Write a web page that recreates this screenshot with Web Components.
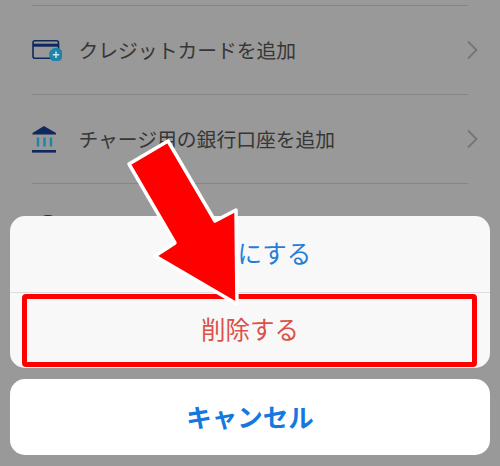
<!DOCTYPE html>
<html lang="ja">
<head>
<meta charset="utf-8">
<style>
  html, body { margin: 0; height: 100%; background: #999; overflow: hidden; }
  body { font-family: "Noto Sans CJK JP", "Noto Sans", sans-serif; }
</style>
</head>
<body>
<pay-screen>
  <pay-row label="クレジットカードを追加">
    <svg slot="icon" width="30" height="22" viewBox="0 -0.7 30 22">
      <rect x="1" y="1" width="25.5" height="17.5" rx="2" fill="none" stroke="#10295c" stroke-width="1.6"/>
      <rect x="1" y="4" width="25.5" height="3" fill="#10295c"/>
      <circle cx="24" cy="15" r="7" fill="#1d84aa"/>
      <path d="M24 11.8v6.4M20.8 15h6.4" stroke="#cfe3ea" stroke-width="1.5"/>
    </svg>
  </pay-row>
  <pay-row label="チャージ用の銀行口座を追加">
    <svg slot="icon" width="30" height="30" viewBox="0 -1 30 30">
      <path d="M12 1 L24 8 V9.5 H0.5 V8 Z" fill="#10295c"/>
      <path d="M6 12.5v9M12.5 12.5v9M19 12.5v9" stroke="#1d84aa" stroke-width="2.4"/>
      <rect x="0" y="25" width="24" height="2.6" fill="#10295c"/>
    </svg>
  </pay-row>
  <pay-row label="">
    <svg slot="icon" width="30" height="28" viewBox="0 0 30 28">
      <circle cx="16" cy="14" r="13" fill="#10295c"/>
    </svg>
  </pay-row>
  <action-sheet>
    <sheet-button tone="blue">既定にする</sheet-button>
    <sheet-button tone="red" marked>削除する</sheet-button>
    <sheet-button slot="cancel" tone="blue" strong>キャンセル</sheet-button>
  </action-sheet>
  <callout-arrow></callout-arrow>
</pay-screen>

<script>
class PayScreen extends HTMLElement {
  constructor() {
    super();
    this.attachShadow({ mode: 'open' }).innerHTML = `
      <style>
        :host { display: block; position: relative; width: 500px; height: 466px; overflow: hidden; background: #999; }
        .list { display: flex; flex-direction: column; padding: 5px 32px 0; }
      </style>
      <div class="list"><slot></slot></div>
      <slot name="overlay"></slot>`;
  }
}

class PayRow extends HTMLElement {
  constructor() {
    super();
    this.attachShadow({ mode: 'open' }).innerHTML = `
      <style>
        :host { display: flex; align-items: center; height: 88.2px; border-top: 1px solid #858585; color: #363636; font-size: 19.8px; }
        .icon { width: 46.5px; height: 30px; display: flex; align-items: center; flex: none; }
        .label { flex: 1; white-space: nowrap; padding-bottom: 1.5px; }
        svg.chev { margin-right: -10px; flex: none; }
      </style>
      <div class="icon"><slot name="icon"></slot></div>
      <span class="label"></span>
      <svg class="chev" width="11" height="20" viewBox="0 0 11 20">
        <path d="M1 1.5 L9.5 10 L1 18.5" fill="none" stroke="#757575" stroke-width="1.8"/>
      </svg>`;
  }
  connectedCallback() {
    this.shadowRoot.querySelector('.label').textContent = this.getAttribute('label');
  }
}

class ActionSheet extends HTMLElement {
  constructor() {
    super();
    this.attachShadow({ mode: 'open' }).innerHTML = `
      <style>
        :host { display: flex; flex-direction: column; gap: 11px; position: absolute; left: 10px; right: 10px; bottom: 11px; }
        .group { display: flex; flex-direction: column; background: #f8f8f8; border-radius: 15px; overflow: hidden; }
        .cancel { display: flex; background: #fff; border-radius: 15px; }
      </style>
      <div class="group"><slot></slot></div>
      <div class="cancel"><slot name="cancel"></slot></div>`;
  }
  connectedCallback() {
    this.slot = 'overlay';
  }
}

class SheetButton extends HTMLElement {
  constructor() {
    super();
    this.attachShadow({ mode: 'open' }).innerHTML = `
      <style>
        :host { display: flex; flex: 1 0 auto; align-items: center; justify-content: center; position: relative; height: 76px; font-size: 24.5px; color: #1f7fd8; }
        :host([tone="red"]) { color: #dc5048; border-top: 1px solid #dcdcdc; height: 75px; }
        :host([strong]) { font-weight: 700; font-size: 25.5px; color: #1578e0; }
        .text { padding-bottom: 4px; }
        .mark { display: none; position: absolute; left: 12px; right: 13px; top: 1px; bottom: 1px; border: 5px solid #f00; border-radius: 4px; }
        :host([marked]) .mark { display: block; }
      </style>
      <span class="text"><slot></slot></span>
      <div class="mark"></div>`;
  }
}

class CalloutArrow extends HTMLElement {
  constructor() {
    super();
    this.attachShadow({ mode: 'open' }).innerHTML = `
      <style>
        :host { display: block; position: absolute; left: 0; top: 0; width: 500px; height: 466px; pointer-events: none; }
      </style>
      <svg width="500" height="466" viewBox="0 0 500 466">
        <polygon points="168,141 129,164 175,243 155,256 237,304 236,210 215,221"
          fill="#f00" stroke="#fff" stroke-width="3.5" stroke-linejoin="round"/>
      </svg>`;
  }
  connectedCallback() {
    this.slot = 'overlay';
  }
}

customElements.define('pay-screen', PayScreen);
customElements.define('pay-row', PayRow);
customElements.define('action-sheet', ActionSheet);
customElements.define('sheet-button', SheetButton);
customElements.define('callout-arrow', CalloutArrow);
</script>
</body>
</html>
